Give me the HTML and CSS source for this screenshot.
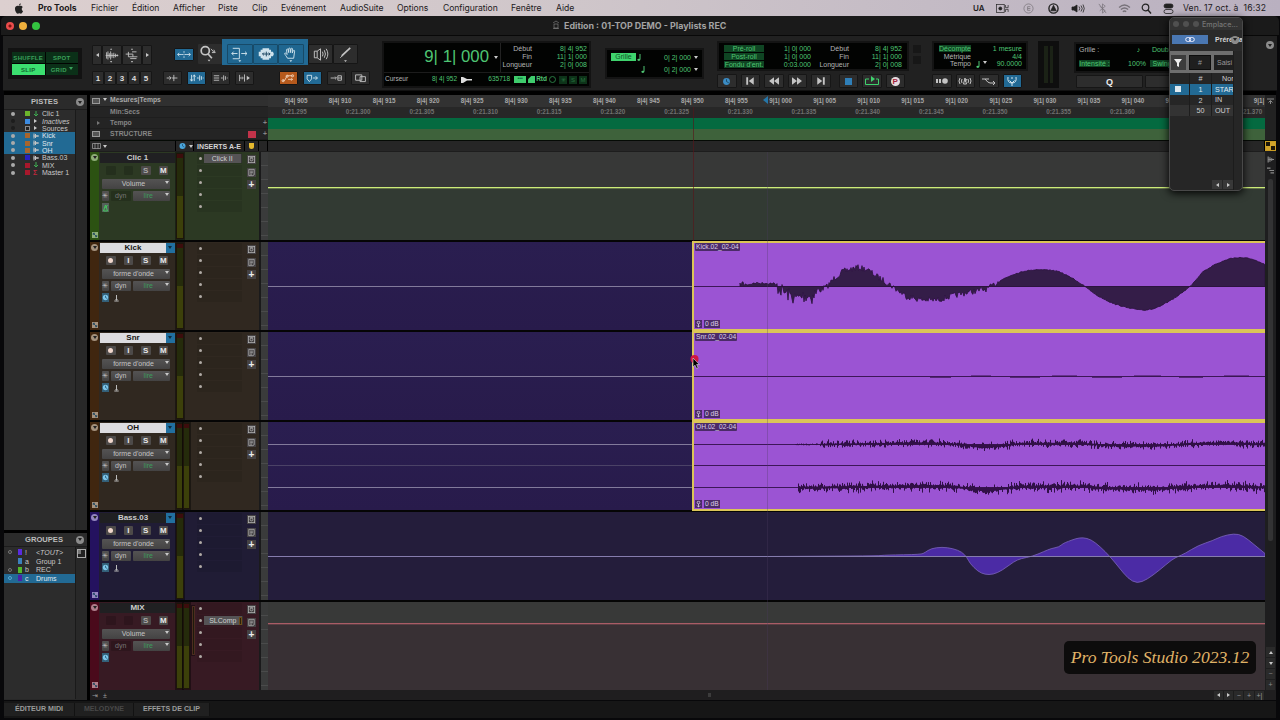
FILE: index.html
```html
<!DOCTYPE html>
<html lang="fr">
<head>
    <meta charset="UTF-8">
    <meta name="viewport" content="width=device-width, initial-scale=1.0">
    <title>Edition : 01-TOP DEMO - Playlists REC</title>
    <link rel="stylesheet" href="styles.css">
</head>
<body>
    <svg class="sprites">
        <symbol id="i-zoomwave" viewBox="0 0 20 18"><path d="M4 6v7M5.500 5v9M7 7v5M8.500 5v9M10 7v5M3 9.500h14M12 6.500v6M14 7.500v4M16 8.500v2"/><path class="f" d="M9 1.500l1.200 1.700H7.800zM9 17.500l1.200-1.700H7.800z"/></symbol>
        <symbol id="i-zoommidi" viewBox="0 0 20 18"><path d="M3 8h8M6 11h10M10 5.500h5M6 5.500v5.500M11 8v3M8 13h7"/><path class="f" d="M10 1.500l1.200 1.700H8.800zM10 17.500l1.200-1.700H8.800z"/></symbol>
        <symbol id="i-spread" viewBox="0 0 19 13"><path d="M2 6.500h5M12 6.500h5M4 4.500l-2 2 2 2M15 4.500l2 2-2 2M9.500 2.500v2M9.500 5.700v1.600M9.500 8.500v2M7 6.500h1.500M10.500 6.500H12"/></symbol>
        <symbol id="i-loupe" viewBox="0 0 22 19"><circle class="w" cx="6" cy="6" r="4.300"/><path class="w" d="M9 9.500l4 4.500"/><path d="M12 4l3 3.500M13 8h3.500M15 5l1.500 3"/><path class="f" d="M8.500 15.500h3l-1.500 2z"/></symbol>
        <symbol id="i-trim" viewBox="0 0 25 19"><path d="M5 3.500h7v11H5M10 9H4M6 7L4 9l2 2M14 9h6M18 7l2 2-2 2"/><path class="f" d="M11 16h3l-1.500 2z"/></symbol>
        <symbol id="i-select" viewBox="0 0 25 19"><path class="f" d="M5 7h2V5h2V3.500h7V5h2v2h2l1 2.500-1 2.500h-2v2h-2v1.500H9V14H7v-2H5z"/><path class="dk" d="M9 9.500h8M13 7v5M10.500 8L9 9.500l1.500 1.500M15.500 8L17 9.500 15.500 11"/></symbol>
        <symbol id="i-hand" viewBox="0 0 25 19"><path d="M9 14c-1-2-3-4-3-5s1.500-.5 2.500 1L8 5c0-1 1.500-1 1.700 0l.5 3V4c0-1 1.500-1 1.700 0l.2 4 .6-4c.2-1 1.600-.8 1.500.2L14 8.500l1-2.500c.5-.8 1.700-.4 1.500.5L15.500 14z"/><path class="f" d="M11 16h3l-1.500 2z"/></symbol>
        <symbol id="i-scrub" viewBox="0 0 24 19"><path d="M5.500 6.500h3v7h-3zM8.500 6.500L12 4v12l-3.500-2.500"/><path d="M14 7q1.500 2.500 0 5M16 5.500q2.500 4 0 8M18 4q3.500 5.500 0 11"/></symbol>
        <symbol id="i-pencil" viewBox="0 0 24 19"><path class="w" d="M8 11.500L17 3"/><path d="M6.500 13.500l2-2"/><path class="f" d="M10.500 16h3l-1.500 2z"/></symbol>
        <symbol id="i-t1" viewBox="0 0 19 13"><path d="M3 6.500h5M6 4.500l2 2-2 2M11 3v7M9 6.500h6"/></symbol>
        <symbol id="i-t2" viewBox="0 0 19 13"><path d="M4 3v7M2.500 8L4 10l1.500-2M7 10V3M5.700 5L7 3l1.300 2M10 6.500h2M13 3.500v6M15 4.500v4M17 6v1"/></symbol>
        <symbol id="i-t3" viewBox="0 0 19 13"><path d="M2 4h6M2 6.500h6M2 9h6M10 6.500h2M13 3.500v6M15 4.500v4M17 6v1"/></symbol>
        <symbol id="i-t4" viewBox="0 0 19 13"><path d="M4 3v7M4 6.500h3M9.500 2.500v8M7 5l1 1.500L7 8"/><path class="f" d="M12 4l3.500 2.500L12 9z"/></symbol>
        <symbol id="i-auto" viewBox="0 0 19 13"><path d="M3 9.500h2L8 4h6M9 8h5M12.500 6.500L14 8l-1.500 1.500"/><circle cx="3.500" cy="9.500" r="1.200"/><circle cx="8" cy="4.500" r="1.200"/><circle cx="14" cy="4" r="1.200"/></symbol>
        <symbol id="i-tag" viewBox="0 0 19 13"><path d="M3.500 3.500h5v4l-2.500 3-2.500-3zM10 6.500h5M13 4.500l2 2-2 2"/></symbol>
        <symbol id="i-link" viewBox="0 0 19 13"><path d="M3 6.500h6M8 5l1.500 1.500L8 8M11 4h4M11 6.500h4M11 9h4M11 4v5M15 4v5"/></symbol>
        <symbol id="i-layer" viewBox="0 0 19 13"><path d="M4 3h7v6H4zM9 5h6v5.500H9z"/></symbol>
        <symbol id="i-clock" viewBox="0 0 10 10"><circle class="f" cx="5" cy="5" r="3.800"/><path class="dk" d="M5 2.500V5l2.500 1.500"/></symbol>
        <symbol id="i-note" viewBox="0 0 6 9"><path d="M4 1v5.500"/><ellipse class="f" cx="2.800" cy="6.800" rx="1.500" ry="1.100"/></symbol>
        <symbol id="i-wave" viewBox="0 0 6 6"><path d="M.5 3h5.500M1 .5v5M2.500 1v4M4 2v2"/></symbol>
        <symbol id="i-midi" viewBox="0 0 6 6"><path d="M3 0v5M1 3l2 2 2-2"/></symbol>
        <symbol id="i-grip" viewBox="0 0 7 7"><path class="f" d="M0 0h7v7H0z"/><path class="dk" d="M1.500 1.500l4 4M1.500 3.500v-2h2M5.500 3.500v2h-2"/></symbol>
        <symbol id="i-metro" viewBox="0 0 5 7"><path d="M2.500 0v5.500M.3 6h4.400M1.500 4.500h2"/></symbol>
        <symbol id="i-pin" viewBox="0 0 5 7"><path d="M2.500 3.500V7M1 5l1.500 1.500L4 5"/><circle cx="2.500" cy="2" r="1.300"/></symbol>
        <symbol id="i-box" viewBox="0 0 10 9"><rect x="1.500" y="1" width="7" height="7"/><circle cx="5" cy="4.500" r="1.500"/><path d="M3 2.500h4"/></symbol>
        <symbol id="i-lines" viewBox="0 0 10 9"><path d="M2 1h6v6L6.500 8H2zM3.500 3h3M3.500 4.700h3M3.500 6.300h2"/></symbol>
    </svg>

    <div class="menubar">
        <svg class="apple" viewBox="0 0 10 12"><path d="M7 0.300Q5 .8 5 2.800Q7 2.600 7 .3M5 3.300C3.500 2.700 .6 2.800 .6 6.300C.6 9 2.200 11.600 3.600 11.600C4.300 11.600 4.500 11.200 5.200 11.200C6 11.200 6.200 11.600 6.900 11.600C8 11.600 9 10 9.400 8.900C7.500 8 7.600 5.300 9.100 4.400C8 2.800 6.300 2.900 5 3.300"/></svg>
        <b>Pro Tools</b><span>Fichier</span><span>Édition</span><span>Afficher</span><span>Piste</span><span>Clip</span><span>Evénement</span><span>AudioSuite</span><span>Options</span><span>Configuration</span><span>Fenêtre</span><span>Aide</span>
        <b class="ua">UA</b>
        <svg viewBox="0 0 15 10"><rect x=".5" y=".5" width="9" height="9" fill="none"/><circle cx="5" cy="5" r="1.800"/><path d="M11 1v3h3V1M11 9V6h3v3" fill="none"/></svg>
        <svg class="pale" viewBox="0 0 12 12"><circle cx="6" cy="6" r="5" fill="none"/><path d="M8 4H5v4h3M5 6h3" fill="none"/></svg>
        <svg viewBox="0 0 12 12"><circle cx="6" cy="6" r="5" fill="none" stroke-width="1.500"/><path d="M6 2.500l3 6H3z"/></svg>
        <svg viewBox="0 0 13 10"><path d="M1 3.500h2l3-2v7l-3-2H1z"/><path d="M8 3q1.500 2 0 4M10 2q2.500 3 0 6M12 1q2.500 4 0 8" fill="none"/></svg>
        <svg class="pale" viewBox="0 0 10 12"><path d="M2 3.500l6 5L5 11V1l3 2.500-6 5M1 1l8 10" fill="none"/></svg>
        <svg class="pale" viewBox="0 0 12 10"><path d="M1 4q5-4.500 10 0M2.700 6q3.300-3 6.600 0M4.500 8q1.500-1.500 3 0" fill="none" stroke-width="1.300"/></svg>
        <svg viewBox="0 0 11 11"><circle cx="4.500" cy="4.500" r="3.300" fill="none" stroke-width="1.200"/><path d="M7 7l3 3.500" stroke-width="1.400"/></svg>
        <svg viewBox="0 0 11 11"><rect x="1" y="1" width="9" height="4" rx="2"/><rect x="1" y="6.500" width="9" height="4" rx="2" fill="none"/></svg>
        <span class="date">Ven. 17 oct. à&nbsp; 16:32</span>
    </div>

    <div class="window">
        <div class="titlebar">
            <i class="light red"></i><i class="light yellow"></i><i class="light green"></i>
            <div class="doc-title"><svg viewBox="0 0 8 9"><path d="M1 3l3-2 3 2M2 4h4v4H2zM1 8.500h6"/></svg>Edition : 01-TOP DEMO - Playlists REC</div>
        </div>

        <div class="toolbar">
            <div class="modes"><span>SHUFFLE</span><span>SPOT</span><span class="on">SLIP</span><span>GRID&nbsp;<i class="down"></i></span></div>

            <div class="zoomers">
                <div class="row"><button class="nar"><i class="left"></i></button><button><svg class="ic"><use href="#i-zoomwave"/></svg></button><button><svg class="ic"><use href="#i-zoommidi"/></svg></button><button class="nar"><i class="right"></i></button></div>
                <div class="row nums"><button>1</button><button>2</button><button>3</button><button>4</button><button>5</button></div>
            </div>

            <div class="tools">
                <div class="row big">
                    <button class="blue zz"><svg class="ic"><use href="#i-spread"/></svg></button>
                    <button class="loupe"><svg class="ic"><use href="#i-loupe"/></svg></button>
                    <div class="smart"><button><svg class="ic"><use href="#i-trim"/></svg></button><button><svg class="ic"><use href="#i-select"/></svg></button><button><svg class="ic"><use href="#i-hand"/></svg></button></div>
                    <button class="t24"><svg class="ic"><use href="#i-scrub"/></svg></button><button class="t24"><svg class="ic"><use href="#i-pencil"/></svg></button>
                </div>
                <div class="row small">
                    <button><svg class="ic"><use href="#i-t1"/></svg></button><button class="blue"><svg class="ic"><use href="#i-t2"/></svg></button><button><svg class="ic"><use href="#i-t3"/></svg></button><button><svg class="ic"><use href="#i-t4"/></svg></button>
                    <button class="orange"><svg class="ic"><use href="#i-auto"/></svg></button><button class="blue"><svg class="ic"><use href="#i-tag"/></svg></button><button><svg class="ic"><use href="#i-link"/></svg></button><button><svg class="ic"><use href="#i-layer"/></svg></button>
                </div>
            </div>

            <div class="counter">
                <div class="main-count"><span>9| 1| 000</span><i class="down"></i></div>
                <div class="range">
                    <em>Début</em><span>8| 4| 952</span>
                    <em>Fin</em><span>11| 1| 000</span>
                    <em>Longueur</em><span>2| 0| 008</span>
                </div>
                <div class="cursor-row">
                    <em>Curseur</em><span>8| 4| 952</span>
                    <svg viewBox="0 0 11 6"><path d="M0 0h2l4 2h5v1.500H6L2 6H0z"/></svg>
                    <span class="smp">635718</span>
                    <i class="gbox wide">•••</i><i class="gbox"></i><span class="rtd">Rtd</span><i class="ring"></i><i class="dim">✳</i><i class="dim">S</i><i class="dim">M</i>
                </div>
            </div>

            <div class="grid-box">
                <b>Grille</b><svg class="note"><use href="#i-note"/></svg><span>0| 2| 000</span><i class="down"></i>
                <u></u><svg class="note n2"><use href="#i-note"/></svg><span>0| 2| 000</span><i class="down"></i>
            </div>

            <div class="transport">
                <div class="lcd">
                    <b>Pré-roll</b><span>1| 0| 000</span><em>Début</em><span>8| 4| 952</span>
                    <b>Post-roll</b><span>1| 0| 000</span><em>Fin</em><span>11| 1| 000</span>
                    <b>Fondu d'ent.</b><span>0:03.000</span><em>Longueur</em><span>2| 0| 008</span>
                </div>
                <div class="row">
                    <button class="cb"><svg class="ic10"><use href="#i-clock"/></svg></button>
                    <button><svg viewBox="0 0 10 8"><path class="f" d="M2 1h1.500v6H2zM8 1v6L4 4z"/></svg></button>
                    <button><svg viewBox="0 0 10 8"><path class="f" d="M5 1v6L1 4zM9 1v6L5 4z"/></svg></button>
                    <button><svg viewBox="0 0 10 8"><path class="f" d="M1 1v6l4-3zM5 1v6l4-3z"/></svg></button>
                    <button class="sep"><svg viewBox="0 0 10 8"><path class="f" d="M2 1v6l4-3zM6.500 1H8v6H6.500z"/></svg></button>
                    <button><i class="stop"></i></button>
                    <button class="loop"><svg viewBox="0 0 16 10"><path d="M5 3H1.500v5.500h13V3H12"/><path class="f" d="M7 0v6l4-3z"/></svg></button>
                    <button><i class="punch">P</i></button>
                </div>
            </div>
            <div class="leds"><i></i><i></i></div>

            <div class="metronome">
                <div class="lcd">
                    <b>Décompte</b><span>1 mesure</span>
                    <em>Métrique</em><span>4/4</span>
                    <em>Tempo</em><span><svg class="note"><use href="#i-note"/></svg><i class="down"></i>90.0000</span>
                </div>
                <div class="row">
                    <button><svg viewBox="0 0 14 8"><path class="f" d="M1 2h2v4H1zM4 2h2v4H4z"/><circle class="f" cx="10" cy="4" r="2.800"/></svg></button>
                    <button><svg viewBox="0 0 14 8"><path d="M2 1q-2 3 0 6M4 2q-1 2 0 4M12 1q2 3 0 6M10 2q1 2 0 4M7 1L5.500 7h3zM7 5l2-3"/></svg></button>
                    <button><svg viewBox="0 0 14 8"><path d="M0 2h7M3 2q3 4 5 4h5M11 4l2 2-2 2"/></svg></button>
                    <button class="blue"><svg viewBox="0 0 14 10"><path d="M3 1q-1 6 4 6t4-6M7 7v3M4.500 4.500L7 7l2.500-2.500M7 1v2"/></svg></button>
                </div>
            </div>

            <div class="vu"><i></i><i></i></div>

            <div class="quantize">
                <div class="lcd"><em>Grille :</em><span>♪&nbsp; &nbsp;</span><span>Double-croche</span><b>Intensité :</b><span>100%</span><b>Swing :</b></div>
                <div class="row"><button>Q</button><button></button></div>
            </div>
            <i class="circ-down top"></i>
        </div>

        <div class="workspace">
            <div class="sidebar">
                <div class="panel pistes">
                    <div class="panel-head">PISTES<i class="circ-down"></i></div>
                    <div class="panel-body" id="trackList"></div>
                </div>
                <div class="panel groupes">
                    <div class="panel-head">GROUPES<i class="circ-down"></i></div>
                    <div class="panel-body">
                        <div class="grp"><i class="o"></i><s style="background:#5a2be0"></s><span>!</span><em>&lt;TOUT&gt;</em></div>
                        <div class="grp"><i></i><s style="background:#3c80bc"></s><span>a</span><span>Group 1</span></div>
                        <div class="grp"><i class="o"></i><s style="background:#54b82c"></s><span>b</span><span>REC</span></div>
                        <div class="grp sel"><i class="p"></i><s style="background:#4a22a8"></s><span>c</span><span>Drums</span></div>
                    </div>
                    <i class="az"></i>
                </div>
            </div>

            <div class="edit">
                <div class="rulers">
                    <div class="ruler-names">
                        <div class="bars"><i class="mini"></i><i class="down"></i><span>Mesures|Temps</span></div>
                        <div><span>Min:Secs</span></div>
                        <div><i class="right"></i><span>Tempo</span><em>+</em></div>
                        <div><i class="mini sq"></i><span>STRUCTURE</span><s></s><em>+</em></div>
                    </div>
                    <div class="ruler-rows">
                        <div class="ruler-bars" id="bars"></div>
                        <div class="ruler-secs" id="secs"></div>
                        <div class="ruler-tempo"></div>
                        <div class="ruler-struct"></div>
                    </div>
                    <div class="side-cap"><svg viewBox="0 0 7 7"><path d="M0 1h7M3.500 6V3M1.500 4.500l2-2 2 2"/></svg></div>
                </div>
                <div class="col-head">
                    <div class="cols"><svg viewBox="0 0 9 6"><path d="M.5 .5h8v5h-8zM3 0v6M6 0v6"/></svg><i class="down"></i></div>
                    <div class="clockcol"><svg class="cb"><use href="#i-clock"/></svg><i class="down"></i></div>
                    <div class="ins">INSERTS A-E</div>
                    <div class="tagcol"><i></i></div>
                    <div class="scale-top"></div>
                    <div class="lane-top"></div>
                    <div class="checker"></div>
                </div>
                <div class="arrange">
                    <div class="tracks" id="tracks"></div>
                    <div class="vscroll">
                        <svg viewBox="0 0 6 6"><use href="#i-wave"/></svg>
                        <svg viewBox="0 0 6 6"><path d="M0 1h3M2 3h4M3 5h3"/></svg>
                        <div class="thumb"></div>
                        <div class="track-gap"></div>
                        <span><i class="up"></i></span><span><i class="down"></i></span><span>−</span><span>+</span>
                    </div>
                </div>
                <div class="hscroll">
                    <span class="hl">⇥</span><span class="hl">±</span>
                    <i class="knob"></i>
                    <div class="nav"><span><i class="left"></i></span><span><i class="right"></i></span><span>−</span><span>+</span><span>+|</span></div>
                </div>
                <div class="playline"></div>
                <div class="redline"></div>
                <svg class="playmark" viewBox="0 0 5 8"><path d="M5 0v8L0 4z"/></svg>
            </div>
        </div>

        <div class="tabs"><span>ÉDITEUR MIDI</span><span class="off">MELODYNE</span><span>EFFETS DE CLIP</span></div>
    </div>

    <div class="memory">
        <div class="mem-title"><i></i><i></i><i></i><span>Emplace...</span></div>
        <div class="mem-top"><div class="mem-blue"><svg viewBox="0 0 10 6"><rect x=".7" y="1" width="5" height="4" rx="2"/><rect x="4.300" y="1" width="5" height="4" rx="2"/></svg></div><b>Prérégla</b><i class="circ-down"></i></div>
        <div class="mem-main">
            <div class="mem-filter"><span><svg viewBox="0 0 9 9"><path d="M0 0h8L5 4v4L3 7V4z"/></svg></span><span class="num">#</span><span class="saisi">Saisi</span></div>
            <div class="mem-row hd"><i></i><span>#</span><b>Nor</b></div>
            <div class="mem-row sel"><i class="sq"></i><span>1</span><b>STAR</b></div>
            <div class="mem-row"><i></i><span>2</span><b>IN</b></div>
            <div class="mem-row alt"><i></i><span>50</span><b>OUT</b></div>
            <div class="mem-nav"><span><i class="left"></i></span><span><i class="right"></i></span></div>
        </div>
    </div>

    <svg class="pointer" viewBox="0 0 9 15"><circle cx="2.500" cy="4" r="4" fill="#d01840"/><path d="M1 3v9l2-1.800 1.600 3.300 1.500-.8-1.500-3.200h2.700z" fill="#000" stroke="#ddd" stroke-width=".6"/></svg>
    <div class="badge">Pro Tools Studio 2023.12</div>

    <script src="script.js"></script>
</body>
</html>
```

FILE: styles.css
```css
* {
    box-sizing: border-box;
}
body {
    margin: 0;
    width: 1280px;
    height: 720px;
    overflow: hidden;
    position: relative;
    background: #050507;
    color: #c9c9c9;
    font-family: "Liberation Sans", Arial, sans-serif;
    font-size: 7px;
    line-height: 1;
}
i, em {
    font-style: normal;
}
s, u {
    text-decoration: none;
}
svg {
    display: block;
    fill: none;
    stroke: currentColor;
    stroke-width: 1;
    overflow: visible;
}
svg .f {
    fill: currentColor;
    stroke: none;
}
svg .w {
    stroke-width: 1.800;
}
svg .dk {
    stroke: #1b4560;
}
.sprites {
    display: none;
}
button {
    border: 1px solid #161616;
    border-radius: 1px;
    background: #2d2d2d;
    color: #c4c4c4;
    padding: 0;
    display: flex;
    align-items: center;
    justify-content: center;
    font: bold 8px "Liberation Sans", Arial, sans-serif;
}
button svg {
    width: 14px;
    height: 10px;
}
.ic {
    width: 100%;
    height: 100%;
}
.down, .up, .left, .right {
    display: inline-block;
    width: 0;
    height: 0;
    border: 2px solid transparent;
}
.down {
    border-top: 3px solid #c9c9c9;
    border-bottom: 0;
}
.up {
    border-bottom: 3px solid #c9c9c9;
    border-top: 0;
}
.left {
    border-right: 3px solid #c9c9c9;
    border-left: 0;
}
.right {
    border-left: 3px solid #c9c9c9;
    border-right: 0;
}
.circ-down {
    width: 8px;
    height: 8px;
    border-radius: 50%;
    background: #8b8b8b;
    display: flex;
    align-items: center;
    justify-content: center;
}
.circ-down::after {
    content: "";
    border: 2px solid transparent;
    border-top: 3px solid #222;
    border-bottom: 0;
}
button.blue, .blue {
    background: #226a95;
    color: #d5e6ef;
}
button.orange {
    background: #b5591c;
    color: #f2d3bb;
}
.cb {
    color: #3b8cc4;
}

/* menu macOS */
.menubar {
    height: 16px;
    background: linear-gradient(90deg, #dccfcf, #cfc6ca 45%, #b9b0c0);
    color: #1d1a1c;
    font-family: Inter, sans-serif;
    font-size: 8.6px;
    letter-spacing: -.05px;
    display: grid;
    grid-template-columns: 38px 53px 41px 41px 45px 34px 29px 59px 57px 46px 68px 45px 417px 23px 26px 25px 24px 25px 22px 22px 22px 21px 1fr;
    align-items: center;
    white-space: nowrap;
}
.menubar b {
    font-weight: 700;
}
.menubar .ua {
    font-size: 8px;
    font-weight: 600;
}
.menubar .date {
    letter-spacing: .12px;
}
.menubar svg {
    height: 11px;
    width: 13px;
    fill: #222;
    stroke: #222;
    stroke-width: .8;
}
.menubar .pale {
    opacity: .45;
}
.menubar .apple {
    width: 10px;
    margin-left: 14px;
    stroke: none;
}

/* fenetre Edition */
.window {
    height: 704px;
    padding: 0 4px;
    background: #08080a;
}
.titlebar {
    height: 20px;
    margin: 0 -3px;
    background: #1a1a1a;
    border-bottom: 1px solid #080808;
    border-radius: 5px 5px 0 0;
    display: flex;
    align-items: center;
    padding-left: 5px;
    gap: 5px;
}
.light {
    width: 8px;
    height: 8px;
    border-radius: 50%;
}
.light.red {
    background: radial-gradient(circle, #7a1511 1px, #ea4c4b 2px);
}
.light.yellow {
    background: #f0b03c;
}
.light.green {
    background: #34c340;
}
.doc-title {
    margin-left: 507px;
    display: flex;
    gap: 4px;
    color: #a3a3a3;
    font: 700 8.9px Inter, sans-serif;
}
.doc-title svg {
    width: 8px;
    height: 9px;
    stroke-width: .7;
    opacity: .7;
}
.toolbar {
    height: 55px;
    margin: 0 -1px;
    padding-left: 4px;
    background: #212121;
    display: grid;
    grid-template-columns: 85px 68px 223px 223px 111px 196px 19px 106px 36px 189px 1fr;
    align-items: start;
    border-bottom: 1px solid #111;
}
.row {
    display: flex;
}
.lcd, .counter, .grid-box, .modes {
    background: #020302;
    border: 1px solid #161616;
    color: #4fc573;
}
.modes {
    margin: 12px 0 0 1px;
    width: 74px;
    height: 31px;
    border: 4px solid #121212;
    display: grid;
    grid-template-columns: 1fr 1fr;
    gap: 1px;
    font-size: 6px;
    font-weight: bold;
    letter-spacing: .3px;
}
.modes span {
    background: #0b3018;
    color: #3ba05b;
    display: flex;
    align-items: center;
    justify-content: center;
}
.modes .on {
    background: #3be070;
    color: #12662e;
}
.modes .down {
    border-top-color: #3ba05b;
    margin-top: -3px;
}
.zoomers {
    margin-top: 9px;
}
.zoomers button {
    width: 20px;
    height: 20px;
}
.zoomers .nar {
    width: 10px;
}
.zoomers .nums {
    margin-top: 6px;
}
.zoomers .nums button {
    width: 12px;
    height: 14px;
    color: #ddd;
}
.tools .row {
    align-items: center;
}
.tools .big {
    height: 26px;
    margin: 3px 0 0 15px;
}
.tools .zz {
    width: 20px;
    height: 13px;
    margin: 4px 4px 0 -1px;
}
.tools .loupe {
    width: 24px;
    height: 20px;
    margin-top: 3px;
    border-color: transparent;
}
.smart {
    width: 86px;
    height: 26px;
    background: #226a95;
    padding: 5px 4px 0 5px;
    display: flex;
}
.smart button {
    flex: 1;
    height: 20px;
    background: #1f6690;
    border: 1px solid #174a68;
    color: #cfe2ec;
}
.tools .t24 {
    width: 25px;
    height: 20px;
    margin-top: 4px;
}
.tools .small {
    margin: 6px 0 0 3px;
    gap: 5px;
}
.small button {
    width: 19px;
    height: 14px;
}
.small .orange {
    margin-left: 20px;
}
.counter {
    margin: 5px 0 0 -1px;
    width: 209px;
    height: 47px;
    border: 2px solid #131313;
    display: grid;
    grid-template: 29px 14px / 117px 1fr;
}
.main-count {
    display: flex;
    align-items: center;
    justify-content: flex-end;
    gap: 5px;
    padding-right: 2px;
    border-right: 1px solid #222;
    font-size: 16.8px;
    white-space: nowrap;
}
.counter em, .lcd em {
    color: #b4b4b4;
    text-align: right;
}
.range {
    display: grid;
    grid-template-columns: 31px 1fr;
    align-content: start;
    line-height: 8.2px;
    padding: 2px 2px 0 0;
}
.range span {
    text-align: right;
}
.cursor-row {
    grid-column: 1 / 3;
    border-top: 1px solid #1c1c1c;
    display: flex;
    align-items: center;
    padding-left: 1px;
    font-size: 6.5px;
}
.cursor-row span {
    width: 49px;
    text-align: right;
}
.cursor-row .smp {
    width: 38px;
    margin-right: 4px;
}
.cursor-row svg {
    width: 11px;
    height: 6px;
    margin-left: 4px;
    fill: #ddd;
    stroke: none;
}
.gbox {
    width: 7px;
    height: 7px;
    background: #3fcd6d;
    color: #063;
    font-size: 5px;
    text-align: center;
    clip-path: polygon(45% 0, 100% 0, 100% 100%, 0 100%, 0 45%);
}
.gbox.wide {
    width: 12px;
    margin-right: 2px;
    clip-path: none;
}
.cursor-row .rtd {
    width: 12px;
    margin-right: 2px;
    font-weight: bold;
}
.ring {
    width: 7px;
    height: 7px;
    border-radius: 50%;
    border: 1px solid #277a42;
    margin-right: 3px;
}
.dim {
    width: 8px;
    height: 8px;
    background: #0d3319;
    color: #27703e;
    text-align: center;
    font-size: 6px;
    line-height: 8px;
    margin-right: 2px;
}
.grid-box {
    margin: 12px 0 0 -1px;
    width: 99px;
    height: 31px;
    border: 2px solid #141414;
    padding: 1px 4px 0 4px;
    display: grid;
    grid-template-columns: 25px 8px 1fr 7px;
    grid-auto-rows: 12px;
    align-items: center;
}
.grid-box b {
    background: #3fd36d;
    color: #0e5226;
    text-align: center;
    font-weight: normal;
    line-height: 8px;
}
.grid-box span {
    text-align: right;
}
.grid-box .down {
    margin-left: 3px;
}
.note {
    width: 6px;
    height: 9px;
}
.n2 {
    margin-left: 4px;
}
.lcd {
    line-height: 8px;
    border: 2px solid #141414;
}
.lcd b {
    background: #0f4523;
    font-weight: normal;
    text-align: center;
    height: 7px;
    line-height: 7.500px;
}
.lcd span {
    text-align: right;
    white-space: nowrap;
}
.transport {
    padding-top: 5px;
}
.transport .lcd {
    width: 192px;
    height: 30px;
    padding: 2px 0 0 5px;
    display: grid;
    grid-template-columns: 40px 47px 38px 1fr;
    grid-auto-rows: 8px;
    padding-right: 5px;
}
.transport .row, .metronome .row {
    margin-top: 3px;
    gap: 4px;
}
.transport button, .metronome button {
    width: 19.500px;
    height: 14px;
}
.transport .sep {
    margin-right: 4px;
}
.ic10 {
    width: 9px;
    height: 9px;
}
.stop {
    width: 7px;
    height: 7px;
    background: #2f7fb8;
}
.transport .loop {
    color: #3fd36d;
}
.loop svg {
    width: 16px;
}
.punch {
    width: 9px;
    height: 9px;
    border-radius: 50%;
    background: #e6dcdf;
    color: #a3223c;
    line-height: 9.500px;
}
.leds {
    padding-top: 9px;
}
.leds i {
    display: block;
    width: 8px;
    height: 8px;
    background: #171717;
    margin-bottom: 3px;
}
.metronome {
    padding-top: 5px;
}
.metronome .lcd {
    width: 96px;
    height: 30px;
    padding: 2px 4px 0 5px;
    display: grid;
    grid-template-columns: 32px 1fr;
    grid-auto-rows: 7.500px;
}
.metronome .note {
    display: inline-block;
    vertical-align: top;
    margin-right: 2px;
}
.metronome .down {
    margin: 0 10px 2px 0;
}
.vu {
    margin-top: 5px;
    width: 21px;
    height: 47px;
    background: #0e0e0e;
    display: flex;
    gap: 2px;
    padding: 5px 6px;
}
.vu i {
    flex: 1;
    background: #1b2216;
}
.quantize {
    padding-top: 6px;
    overflow: hidden;
}
.quantize .lcd {
    width: 165px;
    height: 31px;
    padding: 2px 3px;
    display: grid;
    grid-template-columns: 31px 32px 1fr;
    grid-auto-rows: 14px;
    column-gap: 4px;
}
.quantize .lcd span:nth-child(3) {
    text-align: left;
    padding-left: 2px;
}
.quantize .lcd em {
    text-align: left;
}
.quantize .lcd b:last-child {
    width: 28px;
}
.quantize .row {
    margin: 2px 0 0 2px;
    gap: 2px;
}
.quantize button {
    width: 67px;
    height: 13px;
    color: #eee;
    font-size: 9px;
}
.circ-down.top {
    margin: 5px 0 0 3px;
}

.workspace {
    display: flex;
    height: 609px;
    padding-top: 4px;
    background: #000;
}
.sidebar {
    width: 83px;
    margin-right: 3px;
}
.panel {
    position: relative;
    background: #282828;
}
.pistes {
    height: 435px;
    margin-bottom: 3px;
}
.groupes {
    height: 167px;
}
.panel-head {
    height: 14px;
    background: #2b2b2b;
    border-bottom: 1px solid #1c1c1c;
    display: flex;
    align-items: center;
    justify-content: flex-end;
    gap: 18px;
    padding-right: 3px;
    font-weight: bold;
    font-size: 7.6px;
    color: #bcbcbc;
}
.pistes .panel-head {
    height: 15px;
}
.groupes .panel-head {
    gap: 13px;
}
.panel-body {
    width: 72px;
    height: calc(100% - 15px);
    border-right: 1px solid #1a1a1a;
    background: #2c2c2c;
}
.groupes .panel-body {
    padding-top: 1px;
}
.li, .grp {
    display: flex;
    align-items: center;
    height: 7.370px;
    font-size: 7px;
    padding-left: 7px;
    white-space: nowrap;
}
.li .dot {
    width: 4px;
    height: 4px;
    border-radius: 50%;
    background: #aaa;
    margin-right: 10px;
}
.li .dot.no {
    background: #1d1d1d;
}
.li s {
    width: 5px;
    height: 5px;
    margin-right: 3px;
}
.li svg {
    width: 6px;
    height: 6px;
    margin-right: 3px;
}
.li .right {
    margin: 0 5px 0 1px;
}
.li.sel, .grp.sel {
    background: #226a94;
    color: #e0e8ee;
}
.grp {
    height: 8.700px;
    padding-left: 4px;
}
.grp i {
    width: 4px;
    height: 4px;
    margin-right: 6px;
}
.grp .o {
    border: 1px solid #777;
    border-radius: 50%;
}
.grp .p {
    border: 1px solid #58a9d4;
    border-radius: 50%;
}
.grp s {
    width: 4px;
    height: 6px;
    margin-right: 3px;
}
.grp span:nth-child(3) {
    width: 11px;
}
.grp em {
    font-style: italic;
}
.az {
    position: absolute;
    right: 1px;
    top: 16px;
    width: 9px;
    height: 9px;
    border: 1px solid #aaa;
    background: conic-gradient(#222 50%, #222 0 75%, #777 0);
}

.edit {
    position: relative;
    width: 1186px;
    background: #1d1d1d;
}
.rulers {
    display: flex;
    height: 46px;
    border-bottom: 1px solid #050a05;
}
.ruler-names {
    width: 178px;
    background: #242424;
    color: #868686;
    font-weight: bold;
    font-size: 6.8px;
}
.ruler-names div {
    height: 11px;
    display: flex;
    align-items: center;
    padding-left: 2px;
    border-bottom: 1px solid #1e1e1e;
}
.ruler-names .bars {
    height: 12px;
    background: #303030;
    color: #aaa;
}
.ruler-names span {
    margin-left: 18px;
}
.ruler-names .mini {
    width: 8px;
    height: 6px;
    border: 1px solid #999;
    background: #555;
}
.ruler-names .mini + span {
    margin-left: 10px;
}
.ruler-names .mini + .down {
    margin: -3px -15px 0 3px;
}
.ruler-names .right {
    margin: 0 -8px 0 5px;
    border-left-color: #777;
}
.ruler-names s {
    width: 8px;
    height: 7px;
    background: #c2334a;
    margin-left: auto;
}
.ruler-names em {
    margin-left: auto;
}
.ruler-names s + em {
    margin: 0 1px 0 7px;
}
.ruler-names div:nth-child(3) em {
    margin-right: 1px;
}
.ruler-rows {
    width: 997px;
    overflow: hidden;
    font-size: 6.3px;
    font-weight: bold;
    white-space: nowrap;
}
.ruler-rows div {
    display: flex;
    height: 11px;
    align-items: center;
}
.ruler-rows .ruler-bars {
    height: 12px;
    background: #323232;
    padding-left: 6px;
    color: #a8a8a8;
}
.ruler-bars span {
    flex: 0 0 44.05px;
    text-align: center;
}
.ruler-rows .ruler-secs {
    background: #272727;
    color: #707070;
}
.ruler-secs span {
    flex: 0 0 63.700px;
    padding-left: 14px;
}
.ruler-rows .ruler-tempo {
    background: #046a40;
}
.ruler-rows .ruler-struct {
    background: #3e623b;
}
.side-cap {
    flex: 1;
    padding: 3px 2px;
    color: #888;
    background: #222;
}
.side-cap svg {
    width: 7px;
    height: 7px;
}
.col-head {
    display: flex;
    height: 10px;
    margin-bottom: 1px;
    background: #000;
}
.col-head > div {
    display: flex;
    align-items: center;
    background: #262626;
    border-right: 1px solid #000;
}
.col-head svg {
    width: 9px;
    height: 6px;
    margin: 0 2px;
    color: #999;
    stroke-width: .8;
}
.col-head svg.cb {
    height: 8px;
    color: #4aa6dc;
}
.cols {
    width: 86px;
}
.clockcol {
    width: 18px;
}
.col-head .ins {
    width: 51px;
    justify-content: center;
    font-size: 7px;
    font-weight: bold;
    color: #d4d4d4;
    white-space: nowrap;
    background: #1f1f1f;
}
.tagcol {
    width: 14px;
    justify-content: center;
}
.tagcol i {
    width: 5px;
    height: 6px;
    background: #e5b92e;
    border-radius: 0 0 3px 3px;
}
.scale-top {
    width: 9px;
}
.lane-top {
    width: 997px;
}
.col-head .checker {
    flex: 1;
    border: 1px solid #c89b22;
    background: conic-gradient(#d0a32a 25%, #1c1608 0 50%, #d0a32a 0 75%, #1c1608 0);
}

.arrange {
    display: flex;
}
.tracks {
    width: 1175px;
    height: 538px;
    overflow: hidden;
    background: #000;
}
.track {
    display: grid;
    grid-template-columns: 9px 76px 20px 64px 9px 997px;
    grid-template-rows: 88px;
    height: 90px;
    border-bottom: 2px solid #050505;
}
.strip {
    background: var(--strip);
    padding: 2px 0 2px 1px;
    display: flex;
    flex-direction: column;
    justify-content: space-between;
    color: #a5947f;
}
.strip .circ-down {
    width: 7px;
    height: 7px;
    background: var(--knob);
}
.strip svg {
    width: 6px;
    height: 6px;
    flex: none;
    margin-left: 1px;
    color: var(--knob);
}
.ctrl, .meters, .inserts {
    background: var(--body);
}
.name {
    display: flex;
    height: 10px;
    margin: 1px 0 0 1px;
}
.name b {
    flex: 1;
    background: #202022;
    color: #cdcdcd;
    text-align: center;
    font-size: 8px;
    line-height: 9.500px;
}
.name.sel b {
    background: #dcdce0;
    color: #151515;
}
.name i {
    width: 9px;
    background: #226f9f;
    padding: 3px 2px;
    line-height: 0;
}
.name i::after {
    content: "";
    display: block;
    width: 0;
    border: 2px solid transparent;
    border-top: 3px solid #0d2c40;
    border-bottom: 0;
}
.btns {
    display: flex;
    gap: 8px;
    margin: 3px 0 0 7px;
}
.btns i {
    width: 9.500px;
    height: 9px;
    border-radius: 1px;
    background: #4d4a49;
    color: #e8e8e8;
    font-size: 8px;
    font-weight: bold;
    line-height: 9.500px;
    text-align: center;
}
.btns .ghost {
    background: rgba(0, 0, 0, .16);
}
.btns .soft {
    color: #a8a8a8;
}
.btns .rec::after {
    content: "";
    display: block;
    width: 5px;
    height: 5px;
    margin: 2px;
    border-radius: 50%;
    background: #f0d6cc;
}
.sel-view, .auto i {
    background: linear-gradient(#545353, #444343);
    color: #c4c4c4;
    border-radius: 1px;
    text-align: center;
}
.sel-view {
    margin: 4px 5px 0 3px;
    height: 10px;
    line-height: 10px;
    position: relative;
    font-size: 7px;
    padding-right: 5px;
}
.sel-view .down, .auto .down {
    position: absolute;
    right: 1px;
    top: 2px;
    background: none;
    border-radius: 0;
}
.auto {
    display: flex;
    gap: 2px;
    margin: 2px 5px 0 3px;
}
.auto > i {
    height: 10px;
    line-height: 10px;
    width: 7px;
    font-size: 7px;
}
.auto > .dyn {
    width: 20px;
}
.auto > .dyn.off {
    background: rgba(0, 0, 0, .15);
    color: #777;
}
.auto > .lire {
    width: 38px;
    color: #3d9a5c;
    position: relative;
    padding-right: 6px;
}
.base {
    display: flex;
    gap: 5px;
    margin: 2px 0 0 3px;
}
.base svg {
    width: 7px;
    height: 9px;
    background: #335f78;
    color: #7cc4e8;
}
.base svg.metro {
    width: 5px;
    height: 7px;
    margin-top: 2px;
    background: none;
    color: #bbb;
}
.base svg.click {
    background: #54605a;
    color: #43c75d;
}
.meters {
    display: flex;
    padding: 1px 0 1px 1px;
}
.meters i {
    width: 7px;
    border: 1px solid #1d150a;
    background: linear-gradient(#3c0d0c 4px, #252b0b 4px 50%, #3c400a 50%);
    outline: 1px solid rgba(0, 0, 0, .4);
}
.meters.mono i {
    width: 8px;
}
.meters .gr {
    width: 3px;
    height: 49px;
    margin: 3px 0 0 2px;
    background: #1d1b0c;
    border: 1px solid #4d2c20;
}
.inserts {
    display: grid;
    grid-template-columns: 47px 12px;
}
.slots {
    padding-top: 1px;
}
.slot {
    height: 11px;
    margin: 0 0 1px 2px;
    background: rgba(0, 0, 0, .07);
    display: flex;
    align-items: center;
    white-space: nowrap;
}
.slot::before {
    content: "";
    width: 3px;
    height: 3px;
    margin-left: 1.500px;
    border-radius: 50%;
    background: #b0aaa5;
}
.slot b {
    flex: 1;
    margin-left: 2px;
    height: 9px;
    line-height: 9px;
    background: #555355;
    color: #d0d0d0;
    text-align: center;
    font-weight: normal;
    border-right: 1px solid #333;
}
.slot .bar {
    width: 3px;
    height: 8px;
    background: #2c2009;
    border: 1px solid #6e4d1a;
    margin-left: -4px;
}
.side {
    display: flex;
    flex-direction: column;
    gap: 3.500px;
    padding: 3px 0 0 5px;
}
.side svg, .side b {
    width: 9px;
    height: 9px;
    background: #444143;
    color: #b9b9b9;
    stroke-width: .8;
}
.side b {
    color: #eee;
    text-align: center;
    font-size: 10px;
    line-height: 9px;
}
.scale {
    border-left: 2px solid #1a1a1b;
    background: repeating-linear-gradient(#3a3b3b 0 13px, #4a4b4b 13px 14px);
}
.lane {
    display: flex;
    position: relative;
    background: #352f35;
}
.lane.vol {
    display: block;
}
.lane .line {
    height: 1px;
}
.lane.audio {
    background: #241d3b;
}
.region {
    width: 424px;
    background: linear-gradient(#2a1e50, #281b4b);
}
.region svg, .clip > svg, .lane.audio > svg {
    width: 100%;
    height: 100%;
    overflow: hidden;
}
.clip {
    flex: 1;
    position: relative;
    margin: -1px 0;
    border: 2px solid #dbc558;
    border-right: 0;
    background: #9b54d3;
    z-index: 1;
}
.clip .tag {
    position: absolute;
    left: 1px;
    top: 0;
    padding: 0 1px;
    background: #4b2b68;
    color: #ddcfe8;
    font-size: 6.7px;
    line-height: 8px;
    border-radius: 1px;
}
.clip .gain {
    position: absolute;
    left: 1px;
    bottom: 1px;
    display: flex;
    gap: 2px;
}
.clip .gain svg {
    width: 7px;
    height: 8px;
    padding: .5px 1px;
    background: #4b2b68;
    color: #ddcfe8;
    stroke-width: .8;
}
.clip .gain span {
    background: #4b2b68;
    color: #ddcfe8;
    font-size: 6.700px;
    line-height: 8px;
    padding: 0 1px;
}
.vscroll {
    width: 11px;
    background: #1e1e1f;
    display: flex;
    flex-direction: column;
    align-items: center;
    color: #8a8a8a;
}
.vscroll svg {
    width: 7px;
    height: 7px;
    margin-top: 4px;
}
.vscroll .thumb {
    width: 5px;
    height: 362px;
    margin-top: 5px;
    background: #333334;
    border-radius: 2px;
}
.vscroll .track-gap {
    flex: 1;
}
.vscroll span {
    width: 9px;
    height: 10px;
    margin-top: 1px;
    background: #2a2a2a;
    text-align: center;
    line-height: 9px;
}
.vscroll .down, .vscroll .up {
    margin-top: 3px;
}
.hscroll {
    height: 10px;
    display: flex;
    align-items: center;
    background: #1f1e1f;
    color: #999;
}
.hl {
    width: 11px;
    padding-left: 2px;
}
.knob {
    width: 3px;
    height: 4px;
    margin-left: 596px;
    background: #3c3c3c;
}
.nav {
    display: flex;
    margin-left: auto;
    margin-right: 11px;
}
.nav span {
    width: 10.300px;
    height: 9px;
    background: #2a2a2a;
    display: flex;
    align-items: center;
    justify-content: center;
    border-right: 1px solid #1d1d1d;
}
.playline {
    position: absolute;
    left: 677px;
    top: 57px;
    bottom: 10px;
    width: 1px;
    background: rgba(75, 60, 95, .3);
    z-index: 2;
}
.redline {
    position: absolute;
    left: 603px;
    top: 12px;
    width: 1px;
    height: 134px;
    background: rgba(90, 20, 25, .6);
}
.playmark {
    position: absolute;
    left: 673px;
    top: 1px;
    width: 5px;
    height: 8px;
    fill: #2676a8;
    stroke: none;
}
.tabs {
    height: 17px;
    margin-top: 1px;
    padding-top: 2px;
    background: #161616;
    display: flex;
    font-size: 7.1px;
    font-weight: bold;
    color: #9b9b9b;
}
.tabs span {
    width: 71px;
    height: 13px;
    background: #202020;
    border-right: 1px solid #121212;
    text-align: center;
    line-height: 13.500px;
}
.tabs .off {
    width: 59px;
    color: #484848;
}
.tabs span:last-child {
    width: 76px;
}

/* fenetre Emplacements */
.memory {
    position: absolute;
    left: 1169px;
    top: 17px;
    width: 74px;
    height: 174px;
    border: 1px solid #494949;
    border-radius: 5px;
    background: #262626;
    overflow: hidden;
    box-shadow: 0 2px 8px #000;
    z-index: 5;
    white-space: nowrap;
}
.mem-title {
    height: 12px;
    background: #333;
    display: flex;
    align-items: center;
    gap: 4px;
    padding-left: 3px;
    color: #757575;
    font: 500 7.2px Inter, sans-serif;
}
.mem-title i {
    width: 6px;
    height: 6px;
    border-radius: 50%;
    background: #505050;
}
.mem-title span {
    margin-left: -1px;
}
.mem-top {
    height: 21px;
    display: flex;
    align-items: center;
    padding: 0 0 2px 2px;
    background: #2a2a2a;
    color: #d5d5d5;
    position: relative;
}
.mem-top .circ-down {
    position: absolute;
    right: 3px;
}
.mem-blue {
    width: 37px;
    height: 9px;
    margin-right: 7px;
    background: #4a77b2;
    padding: 1px 13px;
    color: #eef;
}
.mem-blue svg {
    width: 10px;
    height: 7px;
}
.mem-main {
    width: 64px;
    height: 139px;
    border-right: 1px solid #1c1c1c;
    overflow: hidden;
    color: #cfcfcf;
    display: flex;
    flex-direction: column;
}
.mem-filter {
    height: 22px;
    background: #6e6e6e;
    display: flex;
    align-items: center;
    gap: 3px;
    padding-left: 1px;
}
.mem-filter span {
    flex: 0 0 14px;
    height: 15px;
    background: #3c3c3c;
    padding: 4px 3px;
    color: #999;
}
.mem-filter svg {
    fill: #eee;
    stroke: none;
    width: 9px;
    height: 9px;
}
.mem-filter .num {
    flex-basis: 22px;
    background: #1f1f1f;
    border: 1px solid #0d0d0d;
    padding: 3px 0 0 8px;
}
.mem-filter .saisi {
    flex-basis: 30px;
    background: #1f1f1f;
}
.mem-row {
    height: 10.800px;
    display: grid;
    grid-template-columns: 19px 23px 1fr;
    align-items: center;
    font-size: 7.2px;
}
.mem-row span {
    text-align: center;
    line-height: 11px;
    border: solid #1d1d1d;
    border-width: 0 1px;
}
.mem-row b {
    font-weight: normal;
    padding-left: 3px;
}
.mem-row.hd b {
    padding-left: 10px;
}
.mem-row.sel {
    background: #226a94;
    color: #e2ecf2;
}
.mem-row.alt {
    background: #333;
}
.mem-row .sq {
    width: 6px;
    height: 6px;
    margin-left: 5px;
    background: #dfe9ef;
}
.mem-nav {
    margin-top: auto;
    display: flex;
    gap: 1px;
    justify-content: flex-end;
    padding-bottom: 1px;
}
.mem-nav span {
    width: 10px;
    height: 9px;
    background: #383838;
    display: flex;
    align-items: center;
    justify-content: center;
}
.pointer {
    position: absolute;
    left: 692px;
    top: 355px;
    width: 9px;
    height: 15px;
    stroke: none;
    z-index: 6;
}
.badge {
    position: absolute;
    left: 1064px;
    top: 641px;
    width: 192px;
    height: 33px;
    border-radius: 5px;
    background: #0d0c0c;
    color: #e0b367;
    font: italic 17.6px/33px Georgia, "Liberation Serif", serif;
    text-align: center;
    white-space: nowrap;
    z-index: 6;
}
```

FILE: script.js
```js
// Liste des pistes
const list = [
    ['Clic 1', '#6cb52c', 'midi', 1], ['Inactives', '#3c8be0', 'tri', 0], ['Sources', '#222', 'tri', 0],
    ['Kick', '#a8652c', 'wave', 1, 1], ['Snr', '#a8652c', 'wave', 1, 1], ['OH', '#a8652c', 'wave', 1, 1],
    ['Bass.03', '#2720c0', 'wave', 1], ['MIX', '#a8182c', 'midi', 1], ['Master 1', '#a8182c', 'sum', 1]
];
document.getElementById('trackList').innerHTML = list.map(([name, color, icon, on, sel]) => {
    let ic = `<svg style="color:${icon === 'midi' ? '#3fae52' : '#c4c4c4'}"><use href="#i-${icon}"/></svg>`;
    if (icon === 'tri') ic = '<i class="right"></i>';
    if (icon === 'sum') ic = '<b style="color:#c0283c;width:9px">Σ</b>';
    const border = name === 'Sources' ? ';border:1px solid #888' : '';
    const label = name === 'Inactives' ? `<em style="font-style:italic">${name}</em>` : name;
    return `<div class="li${sel ? ' sel' : ''}"><i class="dot${on ? '' : ' no'}"></i><s style="background:${color}${border}"></s>${ic}${label}</div>`;
}).join('');

// Règles
let bars = '';
for (let i = 0; i < 23; i++) {
    const t = 905 + i * 5;
    bars += `<span>${t < 960 ? '8|4| ' + t : '9|1| ' + String(t - 960).padStart(3, '0')}</span>`;
}
document.getElementById('bars').innerHTML = bars;
let secs = '';
for (let i = 0; i < 16; i++) {
    secs += `<span>0:21.${295 + i * 5}</span>`;
}
document.getElementById('secs').innerHTML = secs;

// Formes d'onde : [x, amplitude], x en pixels de la timeline
const kick = [[740, 0], [741, 3], [748, 2], [756, 3.5], [774, 3], [778, -1], [783, -5], [790, -9], [795, -12], [802, -10], [808, -9], [812, -11], [817, -5], [823, -2], [827, 0], [835, 9], [843, 15], [857, 19], [867, 17], [877, 10], [890, 2], [898, -4], [907, -10], [920, -13], [937, -13.5], [950, -10], [967, -6], [985, -3], [992, 0], [1000, 6], [1013, 12], [1025, 15.5], [1037, 17], [1050, 16.5], [1060, 14.5], [1073, 8], [1085, 0], [1097, -9], [1113, -17], [1130, -22], [1145, -23.5], [1153, -22.5], [1160, -20], [1177, -10], [1190, 0], [1203, 15], [1217, 23], [1230, 28], [1240, 29], [1250, 28], [1265, 22]];
const bass = [[767, 0], [876, .5], [886, 1.5], [921, 2], [925, 4], [931, 8], [942, 9.5], [953, 8], [962, 4.5], [967, -1], [970, -7], [978, -15], [985, -18], [993, -18], [1002, -14], [1014, -5], [1021, -2], [1032, 0], [1044, 5], [1051, 8], [1059, 9.5], [1063, 13], [1068, 15], [1076, 18], [1083, 19], [1091, 17], [1100, 10], [1110, 0], [1119, -11], [1128, -22], [1137, -27], [1147, -23], [1159, -14], [1172, -3], [1178, 0], [1185, 3], [1198, 11], [1213, 16], [1221, 20], [1234, 23], [1243, 21], [1254, 12], [1265, 3]];
const drift = [[795, 0], [820, 0], [930, 1.5], [960, 0], [985, -3], [1005, -1], [1020, 1], [1080, 1], [1110, -1], [1155, -1.5], [1200, 1], [1225, 1.5], [1265, 0]];

let seed = 7;
function rnd() {
    seed = (seed * 16807) % 2147483647;
    return seed / 2147483647;
}
function at(points, x) {
    for (let i = 1; i < points.length; i++) {
        const [x0, y0] = points[i - 1], [x1, y1] = points[i];
        if (x <= x1) {
            const t = Math.max(0, (x - x0) / (x1 - x0));
            return y0 + (y1 - y0) * t;
        }
    }
    return points[points.length - 1][1];
}
function kickPath(base, ox) {
    let d = `M${740 - ox} ${base}`;
    for (let x = 740; x <= 1265; x++) {
        const n = x < 746 ? 7 : x < 777 ? 2 : x < 820 ? 14 : x < 1000 ? 6 : 1;
        d += `L${x - ox} ${(base - at(kick, x) + (rnd() - .5) * n).toFixed(1)}`;
    }
    return `<path d="${d}V${base}Z" fill="#341d48" stroke="#29123b" stroke-width=".8"/>`;
}
function noisePath(base, ox, start, amp) {
    let d = '';
    for (let x = start; x <= 1265; x++) {
        const c = at(drift, x);
        const k = x < start + 25 && amp < 3.5 ? .8 : amp;
        const up = k * (.2 + rnd() * rnd() * 1.4), dn = k * (.2 + rnd() * rnd() * 1.4);
        d += `M${x + .5 - ox} ${(base - c - up).toFixed(1)}V${(base - c + dn).toFixed(1)}`;
    }
    return `<path d="${d}" stroke="#301046"/>` + `<path d="M${start - ox} ${base}` + drift.map(p => `L${p[0] - ox} ${base - p[1]}`).join('') + `V${base}Z" fill="#341049" stroke="none"/>`;
}
function bassPath(base, ox) {
    const p = [];
    for (let i = 1; i < bass.length - 1; i++) {
        const [x, y] = bass[i], [nx, ny] = bass[i + 1];
        p.push(`Q${x - ox} ${base - y} ${(x + nx) / 2 - ox} ${base - (y + ny) / 2}`);
    }
    return `<path d="M${767 - ox} ${base}${p.join('')}L${1265 - ox} ${base - 3}V${base}Z" fill="#4b2ba5" stroke="#7c64bd" stroke-width=".8"/>`;
}
const hline = (y, c) => `<path d="M0 ${y}H997" stroke="${c}"/>`;

function clipLane(name, waves, lines) {
    const left = lines.map((y, i) => hline(y, lines.length > 1 && i === 1 ? '#4b4266' : '#827a9b')).join('');
    const right = lines.map(y => hline(y - 1, '#3d1758')).join('');
    return `<div class="lane audio"><div class="region"><svg>${left}</svg></div><div class="clip"><svg>${right}${waves}</svg><div class="tag">${name}.02_02-04</div><div class="gain"><svg><use href="#i-pin"/></svg><span>0 dB</span></div></div></div>`;
}
function volLane(top, above, line, below) {
    return `<div class="lane vol" style="background:${below}"><div class="above" style="height:${top}px;background:${above}"></div><div class="line" style="background:${line};box-shadow:0 1px ${line}55"></div></div>`;
}

const OX = 694;
const brown = ['#40260f', '#302820', '#a5927e'];
const tracks = [
    { name: 'Clic 1', col: ['#2c5212', '#2c3923', '#8eae78'], vol: 1, insert: ['Click II', 0], lane: volLane(35, '#373837', '#cdec78', '#323a33') },
    { name: 'Kick', col: brown, sel: 1, lane: clipLane('Kick', kickPath(43.5, OX), [44.5]) },
    { name: 'Snr', col: brown, sel: 1, lane: clipLane('Snr', '<path d="M236 44.500h21M277 42.800h20M316 44.500h30M358 42.800h25M398 44.500h30M440 42.800h27M485 44.500h24M530 42.800h25" stroke="#34124a" stroke-width=".7"/>', [44.5]) },
    { name: 'OH', col: brown, sel: 1, stereo: 1, lane: clipLane('OH', noisePath(21.5, OX, 795, 3.3) + noisePath(64.5, OX, 798, 4.4), [22.5, 43.5, 65.5]) },
    { name: 'Bass.03', col: ['#24125f', '#201c35', '#9486bf'], lane: `<div class="lane audio"><svg>${bassPath(44.5, 268)}${hline(44.5, '#857cad')}</svg></div>` },
    { name: 'MIX', col: ['#4a0a1b', '#371a23', '#b07f8c'], vol: 1, stereo: 1, gr: 1, insert: ['SLComp', 1], lane: volLane(21, '#383938', '#a95c66', '#383034') }
];

document.getElementById('tracks').innerHTML = tracks.map(t => {
    let slots = '';
    for (let i = 0; i < 5; i++) {
        const ins = t.insert && t.insert[1] === i ? `<b>${t.insert[0]}</b>${t.gr ? '<i class="bar"></i>' : ''}` : '';
        slots += `<div class="slot">${ins}</div>`;
    }
    const btns = t.vol
        ? '<i class="ghost"></i><i class="ghost"></i><i class="soft">S</i><i>M</i>'
        : '<i class="rec"></i><i>I</i><i>S</i><i>M</i>';
    const base = t.name === 'Clic 1'
        ? '<svg class="click" viewBox="0 0 6 9"><path d="M1 8h4L3 2zM3 5l2-3"/></svg>'
        : '<svg><use href="#i-clock"/></svg>' + (t.vol ? '' : '<svg class="metro"><use href="#i-metro"/></svg>');
    return `<div class="track" style="--strip:${t.col[0]};--body:${t.col[1]};--knob:${t.col[2]}">
        <div class="strip"><i class="circ-down"></i><svg><use href="#i-grip"/></svg></div>
        <div class="ctrl">
            <div class="name${t.sel ? ' sel' : ''}"><b>${t.name}</b>${t.vol ? '' : '<i></i>'}</div>
            <div class="btns">${btns}</div>
            <div class="sel-view">${t.vol ? 'Volume' : "forme d'onde"}<span class="down"></span></div>
            <div class="auto"><i>✳</i><i class="dyn${t.vol ? ' off' : ''}">dyn</i><i class="lire">lire<span class="down"></span></i></div>
            <div class="base">${base}</div>
        </div>
        <div class="meters${t.stereo ? '' : ' mono'}"><i></i>${t.stereo ? '<i></i>' : ''}${t.gr ? '<i class="gr"></i>' : ''}</div>
        <div class="inserts"><div class="slots">${slots}</div><div class="side"><svg><use href="#i-box"/></svg><svg><use href="#i-lines"/></svg><b>+</b></div></div>
        <div class="scale"></div>
        ${t.lane}
    </div>`;
}).join('');
```
